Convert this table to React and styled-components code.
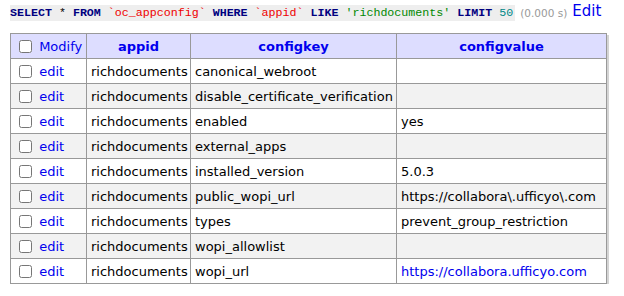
import React from 'react';
import styled, { createGlobalStyle } from 'styled-components';

const GlobalStyle = createGlobalStyle`
  body {
    margin: 0;
    background: #fff;
    font-family: "DejaVu Sans", Verdana, sans-serif;
    color: #000;
  }
`;

const Page = styled.div`
  padding: 5px 10px 0 10px;
`;

const QueryLine = styled.div`
  display: flex;
  align-items: center;
  gap: 5px;
  height: 16px;
`;

const Code = styled.code`
  background: #eee;
  font-family: "Liberation Mono", "Courier New", monospace;
  font-size: 11.65px;
  line-height: 16px;
  white-space: pre;
  padding-right: 2px;
`;

const Keyword = styled.span`
  color: #000080;
  font-weight: bold;
`;

const Str = styled.span`
  color: ${({ $tone }) => $tone};
`;

const Time = styled.span`
  color: #999;
  font-size: 10.5px;
`;

const EditLink = styled.a`
  color: #0000ee;
  font-size: 15px;
  text-decoration: none;
  margin-top: -4px;
`;

const Table = styled.table`
  margin-top: 12px;
  border-collapse: collapse;
  table-layout: fixed;
  width: 596px;
  font-size: 13px;
  box-shadow: 2px 2px 0 #d4d4d4;
`;

const Th = styled.th`
  background: #ddf;
  color: #0000ee;
  font-weight: ${({ $normal }) => ($normal ? 'normal' : 'bold')};
  text-align: ${({ $normal }) => ($normal ? 'left' : 'center')};
  border: 1px solid #999;
  height: 24px;
  padding: 0 4px;
  white-space: nowrap;
`;

const Row = styled.tr`
  background: ${({ $odd }) => ($odd ? '#f2f2f2' : '#fff')};
`;

const Td = styled.td`
  border: 1px solid #999;
  height: 24px;
  padding: 0 4px;
  white-space: nowrap;
  overflow: hidden;
`;

const Check = styled.input`
  margin: 0 3px 0 4px;
  vertical-align: -2px;
`;

const Link = styled.a`
  color: #0000ee;
  text-decoration: none;
`;

const rows = [
  ['canonical_webroot', ''],
  ['disable_certificate_verification', ''],
  ['enabled', 'yes'],
  ['external_apps', ''],
  ['installed_version', '5.0.3'],
  ['public_wopi_url', 'https://collabora\\.ufficyo\\.com'],
  ['types', 'prevent_group_restriction'],
  ['wopi_allowlist', ''],
  ['wopi_url', 'https://collabora.ufficyo.com', true],
];

export default function App() {
  return (
    <Page>
      <GlobalStyle />
      <QueryLine>
        <Code>
          <Keyword>SELECT</Keyword> * <Keyword>FROM</Keyword>{' '}
          <Str $tone="#e00">`oc_appconfig`</Str> <Keyword>WHERE</Keyword>{' '}
          <Str $tone="#e00">`appid`</Str> <Keyword>LIKE</Keyword>{' '}
          <Str $tone="#080">'richdocuments'</Str> <Keyword>LIMIT</Keyword>{' '}
          <Str $tone="#088">50</Str>
        </Code>
        <Time>(0.000 s)</Time>
        <EditLink href="#">Edit</EditLink>
      </QueryLine>
      <Table>
        <colgroup>
          <col style={{ width: 76 }} />
          <col style={{ width: 104 }} />
          <col style={{ width: 206 }} />
          <col style={{ width: 210 }} />
        </colgroup>
        <thead>
          <tr>
            <Th $normal>
              <Check type="checkbox" /> Modify
            </Th>
            <Th>appid</Th>
            <Th>configkey</Th>
            <Th>configvalue</Th>
          </tr>
        </thead>
        <tbody>
          {rows.map(([key, value, isLink], i) => (
            <Row key={key} $odd={i % 2 === 1}>
              <Td>
                <Check type="checkbox" /> <Link href="#">edit</Link>
              </Td>
              <Td>richdocuments</Td>
              <Td>{key}</Td>
              <Td>{isLink ? <Link href="#">{value}</Link> : value}</Td>
            </Row>
          ))}
        </tbody>
      </Table>
    </Page>
  );
}
